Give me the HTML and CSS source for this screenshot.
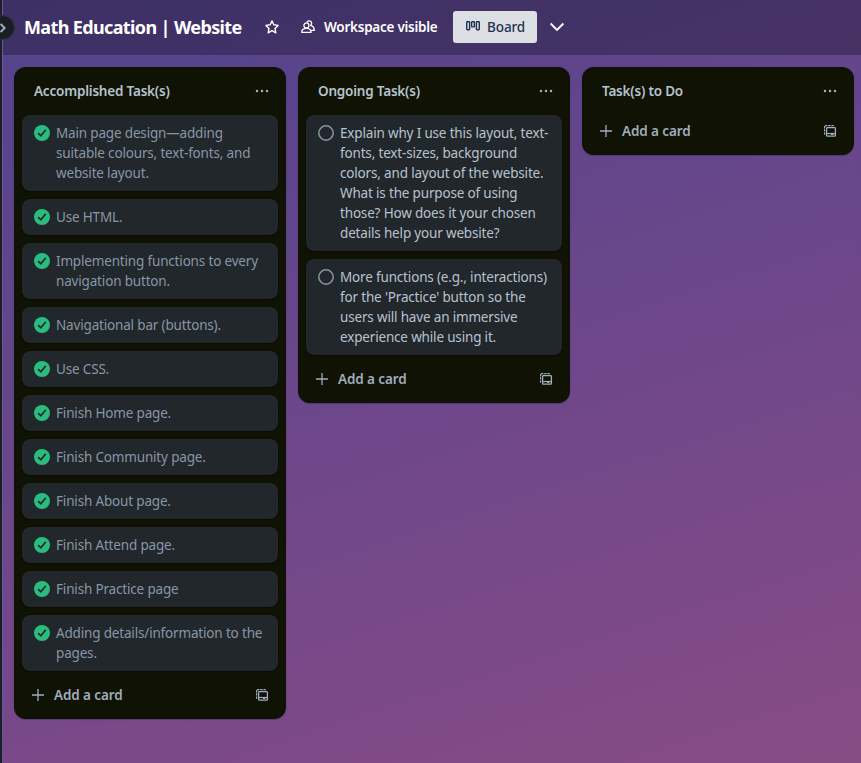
FILE: index.html
```
<!DOCTYPE html>
<html lang="en">
<head>
<meta charset="utf-8">
<title>Math Education | Website</title>
<link rel="stylesheet" href="styles.css">
</head>
<body>
<svg class="defs" width="0" height="0" aria-hidden="true">
  <symbol id="done" viewBox="0 0 16 16"><circle cx="8" cy="8" r="8" fill="#2abb7f"/><path d="M4.6 8.6 6.9 10.8 11.4 5.3" fill="none" stroke="#1d2d2c" stroke-width="1.7" stroke-linecap="round" stroke-linejoin="round"/></symbol>
  <symbol id="open" viewBox="0 0 16 16"><circle cx="8" cy="8" r="7.2" fill="none" stroke="#8696a7" stroke-width="1.5"/></symbol>
  <symbol id="dots" viewBox="0 0 16 16"><g fill="#9fadbc"><circle cx="3" cy="8" r="1.25"/><circle cx="8" cy="8" r="1.25"/><circle cx="13" cy="8" r="1.25"/></g></symbol>
  <symbol id="plus" viewBox="0 0 16 16"><path d="M8 2v12M2 8h12" stroke="#9fadbc" stroke-width="1.3"/></symbol>
  <symbol id="template" viewBox="0 0 16 16"><g fill="none" stroke="#9fadbc"><rect x="4.6" y="4.6" width="8.8" height="8.6" rx=".8" stroke-width="1.3"/><path d="M4.6 10.5h8.8" stroke-width="1.2"/><path d="M2.6 11.8V2.6H12.6" stroke-width="1.2" stroke-dasharray="2.4 .8"/></g><path d="M9 10.6h2.4v1.4H9z" fill="#9fadbc"/></symbol>
</svg>
<div class="app">
  <div class="rail"></div>
  <button class="expand" aria-label="Expand"><svg width="6" height="10" viewBox="0 0 6 10"><path d="M.6 1 4.6 5 .6 9" fill="none" stroke="#9fadbc" stroke-width="2"/></svg></button>
  <main class="board">
    <header class="bar">
      <h1 class="title">Math Education | Website</h1>
      <svg class="star" width="16" height="16" viewBox="0 0 16 16"><path d="M8 1.9 9.8 5.8 14.1 6.4 11 9.4 11.8 13.8 8 11.7 4.2 13.8 5 9.4 1.9 6.4 6.2 5.8Z" fill="none" stroke="#fff" stroke-width="1.4" stroke-linejoin="round"/></svg>
      <svg class="people" width="16" height="16" viewBox="0 0 16 16"><g fill="none" stroke="#fff" stroke-width="1.3" stroke-linejoin="round"><circle cx="6.4" cy="6.4" r="2.5"/><path d="M1.7 13.3c0-2.4 1.5-4 4.7-4s4.7 1.6 4.7 4Z"/><path d="M7 3.1a2.5 2.5 0 1 1 3.6 3.3c2.4.7 3.7 2.4 3.7 5h-3.2"/></g></svg>
      <span class="visible">Workspace visible</span>
      <button class="view"><svg width="16" height="16" viewBox="0 0 16 16"><g fill="none" stroke="#22324f" stroke-width="1.4"><rect x="1.7" y="2.7" width="2.9" height="8" rx=".7"/><rect x="6.6" y="2.7" width="2.8" height="5.2" rx=".7"/><rect x="11.4" y="2.7" width="2.9" height="8" rx=".7"/></g></svg><span>Board</span></button>
      <svg class="chevron" width="16" height="16" viewBox="0 0 16 16"><path d="M1.6 4.5 8 11 14.4 4.5" fill="none" stroke="#fff" stroke-width="1.9"/></svg>
    </header>
    <div class="lists">
      <section class="list">
        <div class="head"><h2>Accomplished Task(s)</h2><svg class="icon"><use href="#dots"/></svg></div>
        <ul class="cards done">
          <li><svg class="icon"><use href="#done"/></svg><p>Main page design—adding<br>suitable colours, text-fonts, and<br>website layout.</p></li>
          <li><svg class="icon"><use href="#done"/></svg><p>Use HTML.</p></li>
          <li><svg class="icon"><use href="#done"/></svg><p>Implementing functions to every<br>navigation button.</p></li>
          <li><svg class="icon"><use href="#done"/></svg><p>Navigational bar (buttons).</p></li>
          <li><svg class="icon"><use href="#done"/></svg><p>Use CSS.</p></li>
          <li><svg class="icon"><use href="#done"/></svg><p>Finish Home page.</p></li>
          <li><svg class="icon"><use href="#done"/></svg><p>Finish Community page.</p></li>
          <li><svg class="icon"><use href="#done"/></svg><p>Finish About page.</p></li>
          <li><svg class="icon"><use href="#done"/></svg><p>Finish Attend page.</p></li>
          <li><svg class="icon"><use href="#done"/></svg><p>Finish Practice page</p></li>
          <li><svg class="icon"><use href="#done"/></svg><p>Adding details/information to the<br>pages.</p></li>
        </ul>
        <div class="add"><svg class="icon"><use href="#plus"/></svg><span>Add a card</span><svg class="icon"><use href="#template"/></svg></div>
      </section>
      <section class="list">
        <div class="head"><h2>Ongoing Task(s)</h2><svg class="icon"><use href="#dots"/></svg></div>
        <ul class="cards">
          <li><svg class="icon"><use href="#open"/></svg><p>Explain why I use this layout, text-<br>fonts, text-sizes, background<br>colors, and layout of the website.<br>What is the purpose of using<br>those? How does it your chosen<br>details help your website?</p></li>
          <li><svg class="icon"><use href="#open"/></svg><p>More functions (e.g., interactions)<br>for the 'Practice' button so the<br>users will have an immersive<br>experience while using it.</p></li>
        </ul>
        <div class="add"><svg class="icon"><use href="#plus"/></svg><span>Add a card</span><svg class="icon"><use href="#template"/></svg></div>
      </section>
      <section class="list">
        <div class="head"><h2>Task(s) to Do</h2><svg class="icon"><use href="#dots"/></svg></div>
        <div class="add"><svg class="icon"><use href="#plus"/></svg><span>Add a card</span><svg class="icon"><use href="#template"/></svg></div>
      </section>
    </div>
  </main>
</div>
</body>
</html>
```
FILE: styles.css
```
* { box-sizing: border-box; }
body, h1, h2, p, ul { margin: 0; padding: 0; }
body {
  height: 763px;
  overflow: hidden;
  font: 13.5px/20px "Noto Sans", sans-serif;
}
button { border: 0; font: inherit; }
svg { flex: none; display: block; }
.defs { position: absolute; }
.app { display: flex; height: 763px; position: relative; }
.rail { width: 2px; background: #1b1f27; }
.expand {
  position: absolute;
  left: -10px;
  top: 15px;
  width: 25px;
  height: 25px;
  padding: 0 0 0 9px;
  border-radius: 50%;
  border: 1px solid #2f3540;
  background: #1a1e24;
  display: flex;
  align-items: center;
}
.board {
  flex: 1;
  border-left: 1px solid #6c559b;
  background: linear-gradient(162deg, #54438c 0%, #57448c 10%, #764889 68%, #884c84 100%);
}
.bar {
  height: 55px;
  padding-bottom: 1px;
  background: rgba(0, 0, 0, .27);
  display: flex;
  align-items: center;
  color: #fff;
  white-space: nowrap;
}
.title { width: 240px; padding-left: 21px; font-size: 18px; line-height: 24px; font-weight: 700; letter-spacing: -.63px; }
.star { margin-left: 21px; }
.people { margin-left: 20px; }
.visible { width: 114px; margin-left: 8px; font-weight: 600; letter-spacing: -.25px; }
.view {
  width: 84px;
  height: 32px;
  margin-left: 15px;
  padding: 0 0 0 12px;
  border-radius: 3px;
  background: #dcdfe4;
  color: #22324f;
  display: flex;
  align-items: center;
  gap: 6px;
  font-weight: 500;
  letter-spacing: -.1px;
}
.chevron { margin-left: 12px; }
.lists { display: flex; align-items: flex-start; gap: 12px; padding: 12px 0 0 11px; }
.list {
  width: 272px;
  padding: 8px;
  border-radius: 12px;
  background: #101204;
  box-shadow: 0 1px 1px rgba(9, 30, 66, .25), 0 0 1px rgba(9, 30, 66, .31);
}
.icon { width: 16px; height: 16px; }
.head { height: 40px; padding: 0 8px 8px 12px; display: flex; align-items: center; justify-content: space-between; }
.head h2 { font-size: 13.5px; line-height: 20px; font-weight: 600; letter-spacing: -.2px; color: #b6c2cf; }
.cards { list-style: none; display: grid; gap: 8px; margin-bottom: 8px; color: #b6c2cf; }
.cards li {
  display: flex;
  gap: 6px;
  padding: 8px 0 8px 12px;
  border-radius: 8px;
  background: #22272b;
  box-shadow: 0 1px 1px rgba(3, 4, 4, .5), 0 0 1px rgba(3, 4, 4, .5);
}
.cards li .icon { margin-top: 2px; }
.cards p { white-space: nowrap; letter-spacing: -.17px; }
.done { color: #8696a7; }
.add { height: 32px; padding: 0 8px; display: flex; align-items: center; gap: 8px; color: #9fadbc; font-weight: 600; letter-spacing: -.1px; }
.add span { flex: 1; }
```
